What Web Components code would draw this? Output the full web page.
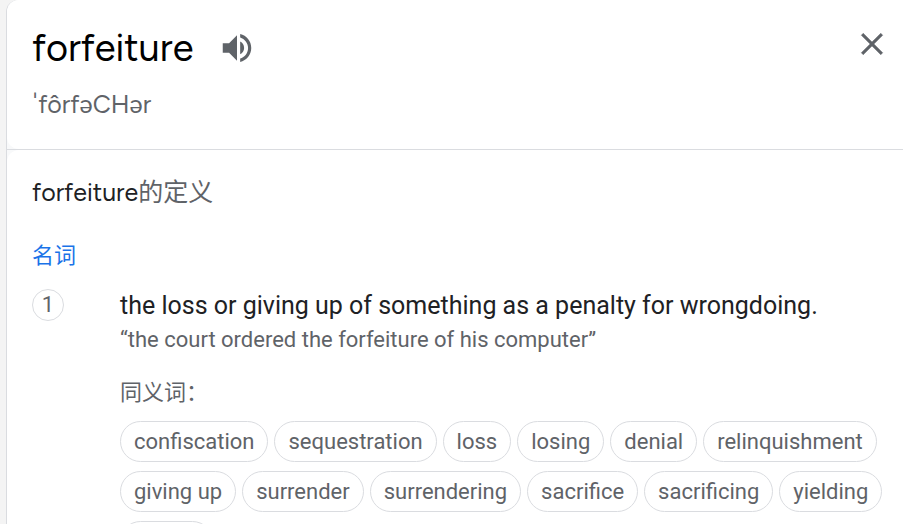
<!DOCTYPE html>
<html lang="zh-CN">
<head>
<meta charset="utf-8">
<meta name="viewport" content="width=device-width, initial-scale=1">
<title>forfeiture</title>
<style>
  html { background: #f4f4f4; }
  body { margin: 0; overflow: hidden; font-family: Roboto, "Noto Sans CJK SC", sans-serif; color: #202124; }
</style>
</head>
<body>
<dictionary-card>
  <word-header slot="header" word="forfeiture" phonetic="ˈfôrfəCHər"></word-header>
  <word-definition word="forfeiture">
    <word-sense number="1">
      the loss or giving up of something as a penalty for wrongdoing.
      <span slot="example">“the court ordered the forfeiture of his computer”</span>
      <synonym-list slot="synonyms" label="同义词：">
        <synonym-chip>confiscation</synonym-chip>
        <synonym-chip>sequestration</synonym-chip>
        <synonym-chip>loss</synonym-chip>
        <synonym-chip>losing</synonym-chip>
        <synonym-chip>denial</synonym-chip>
        <synonym-chip>relinquishment</synonym-chip>
        <synonym-chip>giving up</synonym-chip>
        <synonym-chip>surrender</synonym-chip>
        <synonym-chip>surrendering</synonym-chip>
        <synonym-chip>sacrifice</synonym-chip>
        <synonym-chip>sacrificing</synonym-chip>
        <synonym-chip>yielding</synonym-chip>
        <synonym-chip>ceding</synonym-chip>
      </synonym-list>
    </word-sense>
  </word-definition>
</dictionary-card>
<script>
const define = (name, render) => customElements.define(name, class extends HTMLElement {
  connectedCallback() {
    if (this.shadowRoot) return;
    this.attachShadow({ mode: "open" }).innerHTML = render(this);
  }
});

define("dictionary-card", () => `
  <style>
    :host { display: block; margin-left: 6px; border-left: 1px solid #dadce0; border-top-left-radius: 12px; background: #f8f9fa; }
    header, main { background: #fff; }
    header { border-radius: 12px 0 0 12px; }
    .rule { border-top: 1px solid #dadce0; }
    main { border-top-left-radius: 12px; }
  </style>
  <header><slot name="header"></slot></header>
  <div class="rule"></div>
  <main><slot></slot></main>`);

define("word-header", el => `
  <style>
    :host { display: flex; justify-content: space-between; align-items: flex-start; padding: 24px 15px 29px 25px; }
    .title { display: flex; align-items: center; gap: 25px; }
    h1 { margin: 0; font: 400 38px/48px "Google Sans", Figtree, Lato, sans-serif; color: #000; }
    p { margin: 16px 0 0; font: 400 25px/32px "Google Sans", Figtree, Lato, "Noto Sans", sans-serif; color: #5f6368; }
    button { display: block; border: 0; padding: 0; background: none; color: #5f6368; cursor: pointer; }
    svg { display: block; fill: currentColor; }
    .close { padding: 4px 0 0; }
    .close svg { stroke: currentColor; stroke-width: .4; }
  </style>
  <div>
    <div class="title">
      <h1>${el.getAttribute("word")}</h1>
      <button type="button" aria-label="发音">
        <svg width="38" height="38" viewBox="0 0 24 24"><path d="M3 9v6h4l5 5V4L7 9H3zm13.500 3c0-1.770-1.020-3.290-2.500-4.030v8.050c1.480-.730 2.500-2.250 2.500-4.020zM14 3.230v2.060c2.890.860 5 3.540 5 6.710s-2.110 5.850-5 6.710v2.060c4.010-.910 7-4.490 7-8.770s-2.990-7.860-7-8.770z"/></svg>
      </button>
    </div>
    <p>${el.getAttribute("phonetic")}</p>
  </div>
  <button type="button" class="close" aria-label="关闭">
    <svg width="32" height="32" viewBox="0 0 24 24"><path d="M20 5.410 18.590 4 12 10.590 5.410 4 4 5.410 10.590 12 4 18.590 5.410 20 12 13.410 18.590 20 20 18.590 13.410 12z"/></svg>
  </button>`);

define("word-definition", el => `
  <style>
    :host { display: block; padding: 24px 16px 0 25px; }
    h2 { margin: 0; font: 400 25px/36px "Google Sans", Figtree, Lato, "Noto Sans CJK SC", sans-serif; color: #5f6368; }
    h2 span { color: #202124; }
    h3 { margin: 28px 0 15px; font: 400 22px/36px Roboto, "Noto Sans CJK SC", sans-serif; color: #1a73e8; }
  </style>
  <h2><span>${el.getAttribute("word")}</span>的定义</h2>
  <h3>名词</h3>
  <slot></slot>`);

define("word-sense", el => `
  <style>
    :host { display: grid; grid-template-columns: 32px minmax(0, 1fr); column-gap: 56px; }
    .number { box-sizing: border-box; width: 32px; height: 32px; border: 1px solid #dadce0; border-radius: 50%; text-align: center; font-size: 22px; line-height: 30px; color: #5f6368; }
    .text { font-size: 25px; line-height: 33px; }
    .example { font-size: 22px; line-height: 36px; color: #5f6368; }
  </style>
  <div class="number">${el.getAttribute("number")}</div>
  <div>
    <div class="text"><slot></slot></div>
    <div class="example"><slot name="example"></slot></div>
    <slot name="synonyms"></slot>
  </div>`);

define("synonym-list", el => `
  <style>
    :host { display: block; margin-top: 17px; color: #5f6368; }
    .label { font-size: 22px; line-height: 36px; }
    .chips { display: flex; flex-wrap: wrap; gap: 9px 6px; margin-top: 10px; }
  </style>
  <div class="label">${el.getAttribute("label")}</div>
  <div class="chips"><slot></slot></div>`);

define("synonym-chip", () => `
  <style>
    :host { display: block; }
    button { display: block; box-sizing: border-box; height: 41px; padding: 0 13px; border: 1px solid #dadce0; border-radius: 21px; background: #fff; font: 400 22px/39px Roboto, sans-serif; color: #5f6368; white-space: nowrap; cursor: pointer; }
  </style>
  <button type="button"><slot></slot></button>`);
</script>
</body>
</html>
